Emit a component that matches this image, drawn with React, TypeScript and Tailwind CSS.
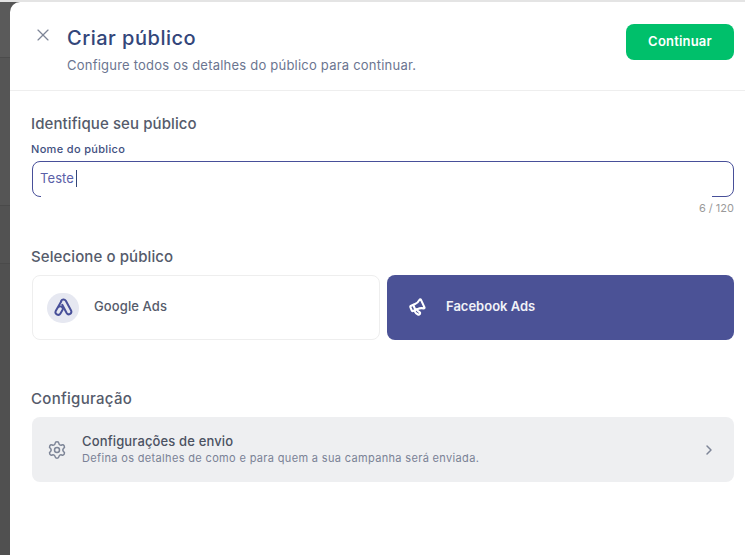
import React from 'react';
import { X, Megaphone, Settings, ChevronRight } from 'lucide-react';

const font = { fontFamily: 'Inter, "Open Sans", sans-serif' };

const App: React.FC = () => {
  return (
    <div className="w-[745px] h-[555px] overflow-hidden flex flex-col bg-[#555555]" style={font}>
      <div className="h-[2px] bg-[#e4e4e4] shrink-0" />
      <div className="flex flex-1">
        {/* Backdrop strip */}
        <div className="w-[10px] shrink-0 flex flex-col">
          <div className="h-[55px] bg-[#5a5a5a]" />
          <div className="h-[148px] border-t border-[#4c4c4c] bg-[#555555]" />
          <div className="h-[58px] border-t border-[#4a4a4a] bg-[#525252]" />
          <div className="flex-1 border-t border-[#4a4a4a] bg-[#505050]" />
        </div>

        <div className="flex-1 bg-white rounded-tl-[10px] flex flex-col">
          {/* Header */}
          <div className="h-[89px] shrink-0 border-b border-[#eeeeee] pl-[23px] pr-[11px] flex justify-between">
            <div className="flex">
              <X className="w-[20px] h-[20px] mt-[23px] text-[#7d8597]" strokeWidth={1.4} />
              <div className="ml-[14px]">
                <h1 className="mt-[21px] text-[20px] leading-[30px] font-medium tracking-[0.5px] text-[#33467a]">Criar público</h1>
                <p className="mt-[3px] text-[13px] leading-[18px] tracking-[0.22px] text-[#6b7590]">Configure todos os detalhes do público para continuar.</p>
              </div>
            </div>
            <button className="mt-[22px] w-[108px] h-[36px] rounded-[8px] bg-[#00c06b] text-white text-[13px] font-semibold tracking-[0.2px]">Continuar</button>
          </div>

          <div className="pl-[21px] pr-[11px]">
            {/* Identificacao */}
            <h2 className="mt-[22px] text-[15px] leading-[22px] font-medium tracking-[0.1px] text-[#555b6b]">Identifique seu público</h2>
            <label className="block mt-[6px] text-[11px] leading-[16px] font-medium tracking-[0.33px] text-[#3f4f7f]">Nome do público</label>
            <div className="relative mt-[4px] ml-[1px] h-[36px] rounded-[8px] border border-[#474f99] px-[7px] flex items-center">
              <span className="-mt-[1px] text-[13px] tracking-[0.1px] text-[#5a60a8]">Teste</span>
              <span className="ml-[2px] -mt-[1px] w-[1px] h-[17px] bg-[#33467a]" />
              <span className="absolute left-[8px] right-[21px] bottom-[-1px] h-[1px] bg-white" />
            </div>
            <p className="mt-[3px] text-right text-[11px] leading-[16px] text-[#9a9a9a]">6 / 120</p>

            {/* Selecao */}
            <h2 className="mt-[30px] text-[15px] leading-[22px] font-medium tracking-[0.1px] text-[#555b6b]">Selecione o público</h2>
            <div className="mt-[7px] ml-[1px] flex gap-[7px]">
              <div className="w-[348px] h-[65px] rounded-[8px] border border-[#eeeeee] flex items-center pl-[14px]">
                <div className="w-[32px] h-[30px] rounded-full bg-[#e6e8f1] flex items-center justify-center">
                  <svg width="21" height="19" viewBox="0 0 20 18" fill="none" stroke="#474f99" strokeWidth="1.9" strokeLinecap="round" strokeLinejoin="round">
                    <path d="M7.6 3.2a2.6 2.6 0 0 1 4.6-.6l5 9.2a2.4 2.4 0 0 1-4.2 2.4L8.8 6.4" />
                    <path d="M7.8 3.4 2.6 12.4a2.5 2.5 0 0 0 1 3.2 2.6 2.6 0 0 0 3.5-.9l2.2-3.7a2.5 2.5 0 0 0-4.4-2.1" />
                  </svg>
                </div>
                <span className="ml-[15px] -mt-[1px] text-[13px] font-medium tracking-[0.1px] text-[#555b6b]">Google Ads</span>
              </div>
              <div className="flex-1 h-[65px] rounded-[8px] bg-[#4b5296] flex items-center pl-[22px]">
                <Megaphone className="w-[17px] h-[17px] text-white -rotate-[25deg]" strokeWidth={3} />
                <span className="ml-[20px] -mt-[1px] text-[13px] font-semibold text-[#f1f2f8]">Facebook Ads</span>
              </div>
            </div>

            {/* Configuracao */}
            <h2 className="mt-[48px] text-[15px] leading-[22px] font-medium tracking-[0.3px] text-[#555b6b]">Configuração</h2>
            <div className="mt-[7px] ml-[1px] h-[65px] rounded-[8px] bg-[#eeeff1] flex items-center pl-[15px] pr-[17px]">
              <Settings className="w-[20px] h-[20px] text-[#7d8597]" strokeWidth={1.8} />
              <div className="ml-[15px] flex-1 -mt-[1px]">
                <p className="text-[13px] leading-[18px] font-medium tracking-[0.14px] text-[#4b5262]">Configurações de envio</p>
                <p className="text-[11px] leading-[16px] tracking-[0.34px] text-[#7a8296]">Defina os detalhes de como e para quem a sua campanha será enviada.</p>
              </div>
              <ChevronRight className="w-[16px] h-[16px] text-[#7d8597]" strokeWidth={2.2} />
            </div>
          </div>
        </div>
      </div>
    </div>
  );
};

export default App;
